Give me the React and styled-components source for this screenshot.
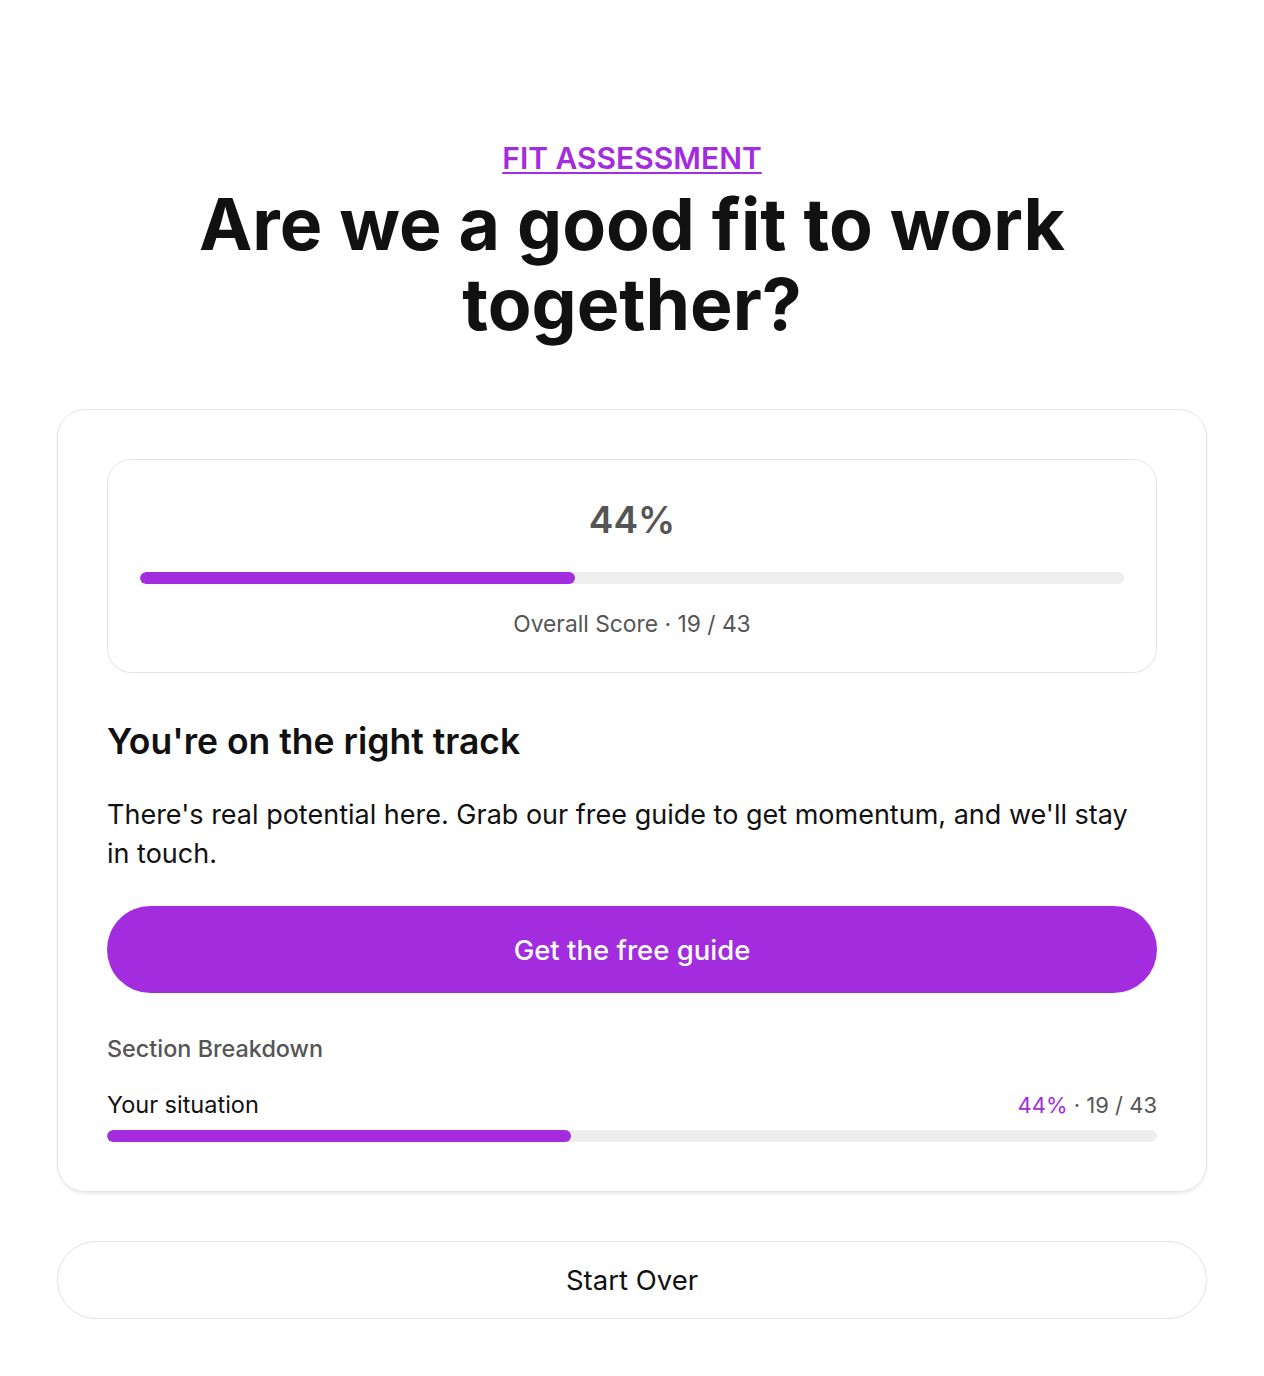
import React from "react";
import styled, { createGlobalStyle } from "styled-components";

const Global = createGlobalStyle`
  html, body { margin: 0; padding: 0; background: #ffffff; }
  body { font-family: "Inter", "Noto Sans", sans-serif; color: #111111; }
  * { box-sizing: border-box; }
`;

const PURPLE = "#a22cde";

const Page = styled.main`
  padding: 140px 57px 57px;
  display: flex;
  flex-direction: column;
  align-items: stretch;
`;

const Header = styled.header`
  display: flex;
  flex-direction: column;
  align-items: center;
  gap: 8px;
  margin-bottom: 65px;
`;

const Eyebrow = styled.a`
  font-size: 30px;
  line-height: 36px;
  font-weight: 600;
  color: ${PURPLE};
  text-decoration: underline;
  text-underline-offset: 3px;
  text-decoration-thickness: 2px;
`;

const Title = styled.h1`
  margin: 0;
  font-size: 71.5px;
  line-height: 80px;
  font-weight: 700;
  text-align: center;
  color: #111111;
  max-width: 940px;
`;

const Card = styled.section`
  border: 1px solid #e4e4e4;
  border-radius: 28px;
  padding: 49px;
  box-shadow: 0 2px 3px rgba(0, 0, 0, 0.08);
  display: flex;
  flex-direction: column;
`;

const ScoreBox = styled.div`
  border: 1px solid #e4e4e4;
  border-radius: 24px;
  padding: 36px 32px 32px;
  display: flex;
  flex-direction: column;
  align-items: stretch;
`;

const ScoreValue = styled.div`
  text-align: center;
  font-size: 37px;
  line-height: 48px;
  font-weight: 600;
  color: #555555;
  margin-bottom: 28px;
`;

const Track = styled.div`
  height: ${(p) => p.$h || 12}px;
  border-radius: 999px;
  background: #eeeeee;
  overflow: hidden;
`;

const Fill = styled.div`
  height: 100%;
  border-radius: 999px;
  background: ${PURPLE};
`;

const ScoreLabel = styled.div`
  text-align: center;
  margin-top: 23px;
  font-size: 22.8px;
  line-height: 33px;
  color: #555555;
`;

const ResultTitle = styled.h2`
  margin: 48px 0 0;
  font-size: 35.5px;
  line-height: 42px;
  font-weight: 600;
  color: #111111;
`;

const ResultText = styled.p`
  margin: 32px 0 0;
  max-width: 1036px;
  font-size: 27px;
  line-height: 39px;
  color: #111111;
`;

const PrimaryButton = styled.button`
  margin-top: 33px;
  height: 87px;
  border: none;
  border-radius: 999px;
  background: ${PURPLE};
  color: #ffffff;
  font-family: inherit;
  font-size: 27.5px;
  font-weight: 500;
  cursor: pointer;
`;

const SectionHeading = styled.div`
  margin-top: 39px;
  font-size: 23.4px;
  line-height: 34px;
  color: #555555;
  font-weight: 500;
`;

const Row = styled.div`
  margin-top: 22px;
  display: flex;
  justify-content: space-between;
  align-items: center;
  line-height: 34px;
  margin-bottom: 8px;
`;

const RowLabel = styled.span`
  font-size: 23.5px;
  color: #111111;
`;

const RowScore = styled.span`
  font-size: 22px;
  color: #555555;
`;

const Pct = styled.span`
  color: ${PURPLE};
`;

const SecondaryButton = styled.button`
  margin-top: 49px;
  height: 78px;
  border: 1px solid #e2e2e2;
  border-radius: 999px;
  background: #ffffff;
  color: #111111;
  font-family: inherit;
  font-size: 27.5px;
  cursor: pointer;
`;

export default function App() {
  const score = 19;
  const max = 43;
  const pct = Math.round((score / max) * 100);
  const w = `${(score / max) * 100}%`;
  return (
    <>
      <Global />
      <Page>
        <Header>
          <Eyebrow href="#">FIT ASSESSMENT</Eyebrow>
          <Title>Are we a good fit to work together?</Title>
        </Header>
        <Card>
          <ScoreBox>
            <ScoreValue>{pct}%</ScoreValue>
            <Track $h={12}>
              <Fill style={{ width: w }} />
            </Track>
            <ScoreLabel>
              Overall Score · {score} / {max}
            </ScoreLabel>
          </ScoreBox>
          <ResultTitle>You're on the right track</ResultTitle>
          <ResultText>
            There's real potential here. Grab our free guide to get momentum, and we'll stay in touch.
          </ResultText>
          <PrimaryButton>Get the free guide</PrimaryButton>
          <SectionHeading>Section Breakdown</SectionHeading>
          <Row>
            <RowLabel>Your situation</RowLabel>
            <RowScore>
              <Pct>{pct}%</Pct> · {score} / {max}
            </RowScore>
          </Row>
          <Track $h={12}>
            <Fill style={{ width: w }} />
          </Track>
        </Card>
        <SecondaryButton>Start Over</SecondaryButton>
      </Page>
    </>
  );
}
